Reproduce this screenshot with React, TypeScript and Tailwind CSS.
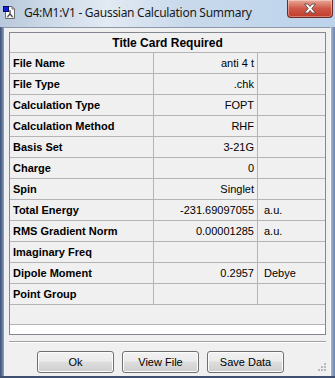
import React from 'react';

const rows: [string, string, string][] = [
  ['File Name', 'anti 4 t', ''],
  ['File Type', '.chk', ''],
  ['Calculation Type', 'FOPT', ''],
  ['Calculation Method', 'RHF', ''],
  ['Basis Set', '3-21G', ''],
  ['Charge', '0', ''],
  ['Spin', 'Singlet', ''],
  ['Total Energy', '-231.69097055', 'a.u.'],
  ['RMS Gradient Norm', '0.00001285', 'a.u.'],
  ['Imaginary Freq', '', ''],
  ['Dipole Moment', '0.2957', 'Debye'],
  ['Point Group', '', ''],
];

function AppIcon() {
  return (
    <svg width="13" height="15" viewBox="0 0 13 15" className="shrink-0">
      <path d="M2.5 1.5 H9 L11.5 4 V13.5 H2.5 Z" fill="#fff" stroke="#6b6b6b" />
      <path d="M9 1.5 V4 H11.5" fill="none" stroke="#6b6b6b" />
      <line x1="7" y1="6" x2="7" y2="9" stroke="#444" strokeWidth="1.2" />
      <line x1="7" y1="9" x2="4.8" y2="11.5" stroke="#444" strokeWidth="1.2" />
      <line x1="7" y1="9" x2="9.2" y2="11.5" stroke="#444" strokeWidth="1.2" />
      <circle cx="7" cy="6" r="0.9" fill="#777" />
      <circle cx="4.6" cy="11.7" r="0.9" fill="#777" />
      <circle cx="9.4" cy="11.7" r="0.9" fill="#777" />
      <rect x="0.5" y="1.5" width="5" height="5" fill="#1020e0" stroke="#0a0a60" />
    </svg>
  );
}

function CloseButton() {
  return (
    <div className="w-[46px] h-[18px] self-start rounded-b-[4px] border border-t-0 border-[#6e2a22] bg-gradient-to-b from-[#e8a898] via-[#d0584a] to-[#c03a28] flex items-center justify-center shadow-[inset_0_0_0_1px_rgba(255,255,255,0.35)]">
      <svg width="14" height="11" viewBox="0 0 14 11">
        <path
          d="M1.5 1 H5 L7 3.6 L9 1 H12.5 L8.8 5.5 L12.5 10 H9 L7 7.4 L5 10 H1.5 L5.2 5.5 Z"
          fill="#fff"
          stroke="#5a4a48"
          strokeWidth="0.9"
          strokeLinejoin="round"
        />
      </svg>
    </div>
  );
}

function Grip() {
  return (
    <svg width="8" height="8" viewBox="0 0 8 8">
      {[
        [6, 0], [6, 3], [3, 3], [6, 6], [3, 6], [0, 6],
      ].map(([x, y], i) => (
        <rect key={i} x={x} y={y} width="2" height="2" fill="#b8b8b8" />
      ))}
    </svg>
  );
}

function WinButton({ label }: { label: string }) {
  return (
    <button className="w-[77px] h-[22px] rounded-[3px] border border-[#707070] bg-[linear-gradient(#f2f2f2_0%,#ebebeb_45%,#dddddd_50%,#cfcfcf_100%)] shadow-[inset_0_0_0_1px_#fcfcfc] text-[11px] text-black leading-none">
      {label}
    </button>
  );
}

export default function App() {
  return (
    <div className="w-[335px] h-[378px] overflow-hidden flex flex-col bg-[#c4d6ea] font-['Liberation_Sans',Arial,sans-serif]">
      {/* Title bar */}
      <div className="h-[27px] shrink-0 flex items-start bg-[linear-gradient(90deg,#b8c9dc_0%,#d3dfec_20%,#e2eaf3_32%,#c9d9eb_55%,#bcd3ec_100%)]">
        <div className="flex items-center gap-[8px] pl-[3px] pt-[5px] flex-1">
          <AppIcon />
          <span className="text-[12px] text-[#1a1a1a] font-['Noto_Sans',sans-serif] leading-none tracking-[-0.28px]">
            G4:M1:V1 - Gaussian Calculation Summary
          </span>
        </div>
        <CloseButton />
        <div className="w-[2px]" />
      </div>

      {/* Frame + client */}
      <div className="flex-1 flex">
        <div className="w-[3px] bg-[linear-gradient(90deg,#3d4f72,#7088b2)]" />
        <div className="flex-1 flex flex-col bg-[#f0f0f0] border-t border-l border-[#8e98a6] border-r border-r-[#f8f8f8]">
          {/* Table */}
          <div className="ml-[5px] mr-[4px] mt-[4px] border border-[#828790] flex flex-col">
            <div className="h-[20px] border-b border-[#b4b4b4] flex items-center justify-center text-[12px] font-bold text-black">
              Title Card Required
            </div>
            {rows.map(([label, value, unit]) => (
              <div key={label} className="h-[21px] border-b border-[#b4b4b4] flex text-[11px] text-black">
                <div className="w-[144px] border-r border-[#b4b4b4] flex items-center pl-[3px] font-bold">{label}</div>
                <div className="w-[104px] border-r border-[#b4b4b4] flex items-center justify-end pr-[3px]">{value}</div>
                <div className="flex-1 flex items-center pl-[6px]">{unit}</div>
              </div>
            ))}
            <div className="h-[20px] border-b border-[#b4b4b4]" />
            <div className="h-[9px] bg-white" />
          </div>

          {/* Separator */}
          <div className="ml-[5px] mr-[4px] mt-[6px] h-[2px] border-t border-[#a0a0a0] border-b border-b-white" />

          {/* Buttons */}
          <div className="flex items-start pl-[33px] pt-[8px] gap-[8px] flex-1">
            <WinButton label="Ok" />
            <WinButton label="View File" />
            <WinButton label="Save Data" />
            <div className="flex-1 flex justify-end self-end pb-[5px] pr-[4px]">
              <Grip />
            </div>
          </div>
        </div>
        <div className="w-[4px] bg-[linear-gradient(90deg,#9fb6d3,#6b83ad)]" />
      </div>
      <div className="h-[2px] shrink-0 bg-[#3e4f6f]" />
    </div>
  );
}
